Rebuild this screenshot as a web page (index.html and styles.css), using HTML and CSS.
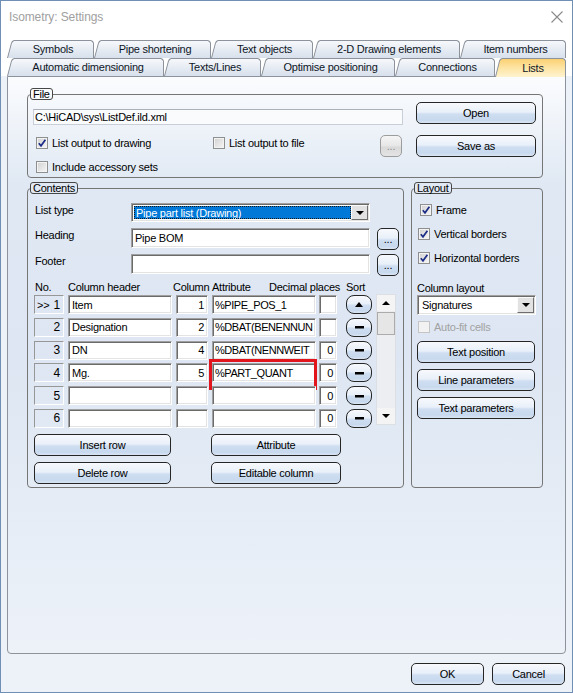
FILE: index.html
```html
<!DOCTYPE html>
<html lang="en">
<head>
<meta charset="utf-8">
<title>Isometry: Settings</title>
<link rel="stylesheet" href="styles.css">
</head>
<body>
<div class="window">
  <div class="titlebar">
    <span class="title">Isometry: Settings</span>
    <svg class="close" width="12" height="12" viewBox="0 0 12 12"><path d="M0.5 0.5L11.5 11.5M11.5 0.5L0.5 11.5" stroke="#8a8a8a" stroke-width="1.1" fill="none"/></svg>
  </div>
  <div class="tabs">
    <div class="tabrow">
      <div class="tab t-sym">Symbols</div>
      <div class="tab t-pipe">Pipe shortening</div>
      <div class="tab t-txt">Text objects</div>
      <div class="tab t-2d">2-D Drawing elements</div>
      <div class="tab t-item">Item numbers</div>
    </div>
    <div class="tabrow">
      <div class="tab t-auto">Automatic dimensioning</div>
      <div class="tab t-tl">Texts/Lines</div>
      <div class="tab t-opt">Optimise positioning</div>
      <div class="tab t-con">Connections</div>
      <div class="tab t-lists sel">Lists</div>
    </div>
  </div>

  <div class="page">
    <fieldset class="grp file">
      <legend>File</legend>
      <div class="file-body">
        <div class="file-left">
          <div class="path">C:\HiCAD\sys\ListDef.ild.xml</div>
          <div class="chkrow">
            <label class="chk first"><span class="cb"><svg width="10" height="10" viewBox="0 0 10 10"><path d="M1.8 5.2L4 7.8L8.4 1.8" fill="none" stroke="#1b2c86" stroke-width="1.7"/></svg></span>List output to drawing</label>
            <label class="chk"><span class="cb"></span>List output to file</label>
            <button class="btn dots dis">...</button>
          </div>
          <label class="chk inc"><span class="cb"></span>Include accessory sets</label>
        </div>
        <div class="file-right">
          <button class="btn wide">Open</button>
          <button class="btn wide">Save as</button>
        </div>
      </div>
    </fieldset>

    <div class="lower">
      <fieldset class="grp contents">
        <legend>Contents</legend>
        <div class="c-body">
          <div class="frow lt">
            <span class="flabel">List type</span>
            <div class="combo wide sel"><span class="cval">Pipe part list (Drawing)</span><span class="carrow"></span></div>
          </div>
          <div class="frow hd">
            <span class="flabel">Heading</span>
            <div class="inp wide">Pipe BOM</div>
            <button class="btn dots">...</button>
          </div>
          <div class="frow ft">
            <span class="flabel">Footer</span>
            <div class="inp wide"></div>
            <button class="btn dots">...</button>
          </div>
          <div class="thead">
            <span class="h-no">No.</span>
            <span class="h-ch">Column header</span>
            <span class="h-col">Column</span>
            <span class="h-at">Attribute</span>
            <span class="h-dp">Decimal places</span>
            <span class="h-so">Sort</span>
          </div>
          <div class="tbl">
            <div class="rows">
              <div class="trow">
                <span class="no"><span class="mark">&gt;&gt;</span>1</span>
                <span class="inp c-ch">Item</span>
                <span class="inp c-col">1</span>
                <span class="inp c-at">%PIPE_POS_1</span>
                <span class="inp c-dp"></span>
                <button class="btn sort"><span class="g-up"></span></button>
              </div>
              <div class="trow">
                <span class="no">2</span>
                <span class="inp c-ch">Designation</span>
                <span class="inp c-col">2</span>
                <span class="inp c-at">%DBAT(BENENNUN</span>
                <span class="inp c-dp"></span>
                <button class="btn sort"><span class="g-minus"></span></button>
              </div>
              <div class="trow">
                <span class="no">3</span>
                <span class="inp c-ch">DN</span>
                <span class="inp c-col">4</span>
                <span class="inp c-at">%DBAT(NENNWEIT</span>
                <span class="inp c-dp">0</span>
                <button class="btn sort"><span class="g-minus"></span></button>
              </div>
              <div class="trow">
                <span class="no">4</span>
                <span class="inp c-ch">Mg.</span>
                <span class="inp c-col">5</span>
                <span class="inp c-at">%PART_QUANT</span>
                <span class="inp c-dp">0</span>
                <button class="btn sort"><span class="g-minus"></span></button>
                <span class="hl"></span>
              </div>
              <div class="trow">
                <span class="no">5</span>
                <span class="inp c-ch"></span>
                <span class="inp c-col"></span>
                <span class="inp c-at"></span>
                <span class="inp c-dp">0</span>
                <button class="btn sort"><span class="g-minus"></span></button>
              </div>
              <div class="trow">
                <span class="no">6</span>
                <span class="inp c-ch"></span>
                <span class="inp c-col"></span>
                <span class="inp c-at"></span>
                <span class="inp c-dp">0</span>
                <button class="btn sort"><span class="g-minus"></span></button>
              </div>
            </div>
            <div class="vscroll">
              <span class="sb-btn"><span class="a-up"></span></span>
              <span class="sb-thumb"></span>
              <span class="sb-track"></span>
              <span class="sb-btn"><span class="a-down"></span></span>
            </div>
          </div>
          <div class="btngrid">
            <button class="btn">Insert row</button>
            <button class="btn">Attribute</button>
            <button class="btn">Delete row</button>
            <button class="btn">Editable column</button>
          </div>
        </div>
      </fieldset>

      <fieldset class="grp layout">
        <legend>Layout</legend>
        <div class="l-body">
          <label class="chk lchk first"><span class="cb"><svg width="10" height="10" viewBox="0 0 10 10"><path d="M1.8 5.2L4 7.8L8.4 1.8" fill="none" stroke="#1b2c86" stroke-width="1.7"/></svg></span>Frame</label>
          <label class="chk lchk"><span class="cb"><svg width="10" height="10" viewBox="0 0 10 10"><path d="M1.8 5.2L4 7.8L8.4 1.8" fill="none" stroke="#1b2c86" stroke-width="1.7"/></svg></span>Vertical borders</label>
          <label class="chk lchk"><span class="cb"><svg width="10" height="10" viewBox="0 0 10 10"><path d="M1.8 5.2L4 7.8L8.4 1.8" fill="none" stroke="#1b2c86" stroke-width="1.7"/></svg></span>Horizontal borders</label>
          <span class="l-label">Column layout</span>
          <div class="combo sig"><span class="cval">Signatures</span><span class="carrow"></span></div>
          <label class="chk lchk dis"><span class="cb"></span>Auto-fit cells</label>
          <button class="btn lbtn first">Text position</button>
          <button class="btn lbtn">Line parameters</button>
          <button class="btn lbtn">Text parameters</button>
        </div>
      </fieldset>
    </div>
  </div>

  <div class="footer">
    <button class="btn dlg">OK</button>
    <button class="btn dlg">Cancel</button>
  </div>
</div>
</body>
</html>
```
FILE: styles.css
```css
* { box-sizing: border-box; }
html, body { margin: 0; padding: 0; }
body {
  width: 573px; height: 693px; overflow: hidden;
  font-family: "Liberation Sans", Arial, sans-serif;
  font-size: 11px; letter-spacing: -0.25px; color: #000;
  background: #edf2f9;
}
.window {
  width: 573px; height: 693px;
  border: 1px solid #6f8fb5;
  background: #edf2f9;
  display: flex; flex-direction: column;
}

/* title */
.titlebar {
  height: 31px; flex: none; background: #fff;
  display: flex; align-items: center; justify-content: space-between;
  padding: 0 9px 0 8px;
}
.title { font-size: 12px; letter-spacing: -0.1px; color: #a0a0a0; }

/* tabs */
.tabs { background: #fff; padding: 8px 6px 0 6px; flex: none; }
.tabrow { display: flex; height: 18px; }
.tab {
  position: relative; isolation: isolate; flex: none;
  height: 18px; padding-left: 5px;
  display: flex; align-items: center; justify-content: center;
  white-space: nowrap; color: #0e1626;
  background: #8c939c;
  clip-path: polygon(0 100%, 4px 3px, 5px 1px, 7px 0, calc(100% - 3px) 0, calc(100% - 1px) 1px, 100% 3px, 100% 100%);
}
.tab::before {
  content: ""; position: absolute; top: 1px; left: 1px; right: 1px; bottom: 0; z-index: -1;
  background: linear-gradient(#f6f8fb, #d7e0ec);
  clip-path: polygon(0 100%, 4px 2px, 6px 0, calc(100% - 2px) 0, 100% 2px, 100% 100%);
}
.tab.sel { z-index: 2; height: 19px; }
.tab.sel::before { background: linear-gradient(#fbd073, #fde3a0 45%, #fff3d0); }
.t-sym { width: 87px; } .t-pipe { width: 117px; } .t-txt { width: 102px; }
.t-2d { width: 147px; } .t-item { width: 106px; }
.t-auto { width: 157px; } .t-tl { width: 97px; } .t-opt { width: 134px; }
.t-con { width: 100px; } .t-lists { width: 71px; }

/* page */
.page {
  flex: none; height: 578px; margin: 0 6px;
  border: 1px solid #8c939c; border-radius: 0 0 4px 4px;
  background: linear-gradient(#fbfcfe 0, #dfe8f3 110px, #dde6f2 280px, #edf2f9 100%);
  padding: 11px 22px 0 19px;
}

/* group boxes */
.grp { margin: 0; padding: 0; border: 1px solid #767676; border-radius: 4px; min-width: 0; }
.grp legend {
  margin-left: 2px; padding: 0 2px; height: 12px; line-height: 10px;
  border: 1px solid #474747; border-radius: 3px;
}

/* buttons */
.btn {
  font: inherit; letter-spacing: inherit; color: #000;
  height: 22px; padding: 0;
  border: 1px solid #262626; border-radius: 5px;
  background: linear-gradient(#f7f9fd 0%, #e9f0f9 45%, #cfdef1 55%, #c8d9ee 85%, #d8e4f3 100%);
  display: flex; align-items: center; justify-content: center; white-space: nowrap;
}
.btn.wide { width: 120px; }
.btn.dots { width: 22px; flex: none; }
.btn.dis { border-color: #9c9c9c; color: #8d8d8d; background: linear-gradient(#f5f5f5, #e6e6e6 50%, #d9d9d9 55%, #e4e4e4); }
.btn.dlg { width: 73px; }

/* checkboxes */
.chk { display: flex; align-items: center; height: 14px; white-space: nowrap; }
.cb {
  width: 12px; height: 12px; flex: none; margin-right: 4px;
  border: 1px solid #8e8f8f;
  background: linear-gradient(135deg, #d0d0d0, #f7f7f7);
  box-shadow: inset 0 0 0 1px #f3f3f3;
  display: flex; align-items: center; justify-content: center;
}
.chk.dis { color: #a2a2a2; }
.chk.dis .cb { border-color: #c5c5c5; background: #f2f2f2; box-shadow: none; }

/* inputs */
.inp {
  background: #fff; height: 19px;
  border: 1px solid; border-color: #a0a0a0 #fff #fff #a0a0a0;
  box-shadow: inset 1px 1px 0 #6b6b6b, inset -1px -1px 0 #e3e3e3;
  display: flex; align-items: center; padding-left: 3px;
  white-space: nowrap; overflow: hidden; flex: none;
}
.combo {
  display: flex; background: #fff; padding: 1px; flex: none;
  border: 1px solid; border-color: #a0a0a0 #fff #fff #a0a0a0;
  box-shadow: inset 1px 1px 0 #6b6b6b, inset -1px -1px 0 #e3e3e3;
}
.cval { flex: 1; display: flex; align-items: center; padding-left: 2px; margin: 1px 0 1px 1px; white-space: nowrap; overflow: hidden; }
.combo.sel .cval { background: #0078d7; color: #fff; outline: 1px dotted #1a1a1a; outline-offset: -1px; }
.carrow {
  width: 17px; flex: none; background: #e2e2e2;
  border: 1px solid; border-color: #fbfbfb #6e6e6e #6e6e6e #fbfbfb;
  display: flex; align-items: center; justify-content: center;
}
.carrow::after { content: ""; border-left: 4px solid transparent; border-right: 4px solid transparent; border-top: 4px solid #000; }

/* file group */
.file-body { display: flex; gap: 13px; padding: 2px 6px 3px 5px; }
.file-left { width: 370px; display: flex; flex-direction: column; }
.file-right { width: 120px; display: flex; flex-direction: column; gap: 11px; }
.path {
  margin-top: 7px; height: 16px; padding-left: 1px;
  background: #f9fbfd; border: 1px solid #c8cfd8; border-top-color: #aab1ba;
  display: flex; align-items: center; white-space: nowrap;
}
.chkrow { display: flex; align-items: flex-start; margin-top: 10px; height: 22px; }
.chkrow .chk { margin-top: 1px; }
.chk.first { margin-left: 3px; width: 177px; }
.chkrow .dots { margin-left: auto; margin-right: 1px; }
.inc { margin-top: 3px; margin-left: 3px; }

/* lower area */
.lower { display: flex; gap: 7px; margin-top: 4px; }
.contents { width: 377px; flex: none; }
.layout { flex: 1; }

.c-body { display: flex; flex-direction: column; padding: 0 0 3px 6px; }
.frow { display: flex; align-items: flex-start; height: 22px; }
.frow.lt { margin-top: 9px; height: 19px; }
.frow.hd { margin-top: 6px; }
.frow.ft { margin-top: 4px; }
.flabel { width: 97px; padding-left: 1px; line-height: 14px; flex: none; }
.combo.wide { width: 239px; height: 19px; }
.inp.wide { width: 239px; height: 20px; }
.frow .dots { margin-left: 7px; }

.thead { display: flex; margin-top: 4px; height: 14px; line-height: 14px; white-space: nowrap; }
.h-no { width: 34px; padding-left: 1px; }
.h-ch { width: 105px; }
.h-col { width: 39px; }
.h-at { width: 57px; }
.h-dp { width: 77px; }

.tbl { display: flex; height: 134px; }
.rows { width: 338px; display: flex; flex-direction: column; gap: 3.75px; padding-top: 1px; }
.trow { position: relative; display: flex; align-items: center; height: 19px; }
.no {
  width: 30px; height: 19px; flex: none;
  border: 1px solid; border-color: #979797 #fff #fff #979797;
  display: flex; align-items: center; justify-content: flex-end; padding: 0 3px 0 2px;
  font-size: 12px;
}
.no .mark { margin-right: auto; font-size: 11px; }
.c-ch { width: 104px; margin-left: 4px; }
.c-col { width: 32px; margin-left: 4px; justify-content: flex-end; padding-right: 3px; }
.c-at { width: 104px; margin-left: 4px; padding-left: 2px; letter-spacing: -0.45px; }
.c-dp { width: 18px; margin-left: 3px; justify-content: flex-end; padding-right: 3px; }
.btn.sort { width: 26px; height: 19px; margin-left: 9px; border-radius: 8px; flex: none; }
.g-up { border-left: 4px solid transparent; border-right: 4px solid transparent; border-bottom: 5px solid #000; }
.g-minus { width: 9px; height: 2px; background: #000; box-shadow: 0 0.5px 0 #000; }
.hl {
  position: absolute; left: 175px; top: -4px; width: 108px; height: 31px;
  border: 3px solid #e3151c; pointer-events: none;
}

.vscroll {
  width: 20px; height: 131px; margin-left: 4px; flex: none;
  background: #eceef2; border: 1px solid #dcdfe3;
  display: flex; flex-direction: column;
}
.sb-btn { height: 16px; flex: none; background: #f4f4f4; display: flex; align-items: center; justify-content: center; }
.a-up { border-left: 4px solid transparent; border-right: 4px solid transparent; border-bottom: 4px solid #000; }
.a-down { border-left: 4px solid transparent; border-right: 4px solid transparent; border-top: 4px solid #000; }
.sb-thumb { height: 23px; flex: none; margin-top: 1px; background: #e6e6e6; border: 1px solid #ababab; }
.sb-track { flex: 1; }

.btngrid { display: grid; grid-template-columns: 137px 130px; column-gap: 40px; row-gap: 6px; margin-top: 6px; }

.l-body { display: flex; flex-direction: column; padding: 0 6px 0 5px; }
.lchk { margin-top: 10px; margin-left: 1px; }
.lchk.first { margin-top: 9px; width: auto; }
.l-label { margin-top: 16px; line-height: 14px; }
.combo.sig { width: 119px; height: 20px; }
.lchk.dis { margin-top: 5px; }
.btn.lbtn { width: 118px; margin-top: 6px; }
.btn.lbtn.first { margin-top: 7px; }

/* footer */
.footer { display: flex; justify-content: flex-end; gap: 8px; padding: 9px 7px 0 0; }
```
